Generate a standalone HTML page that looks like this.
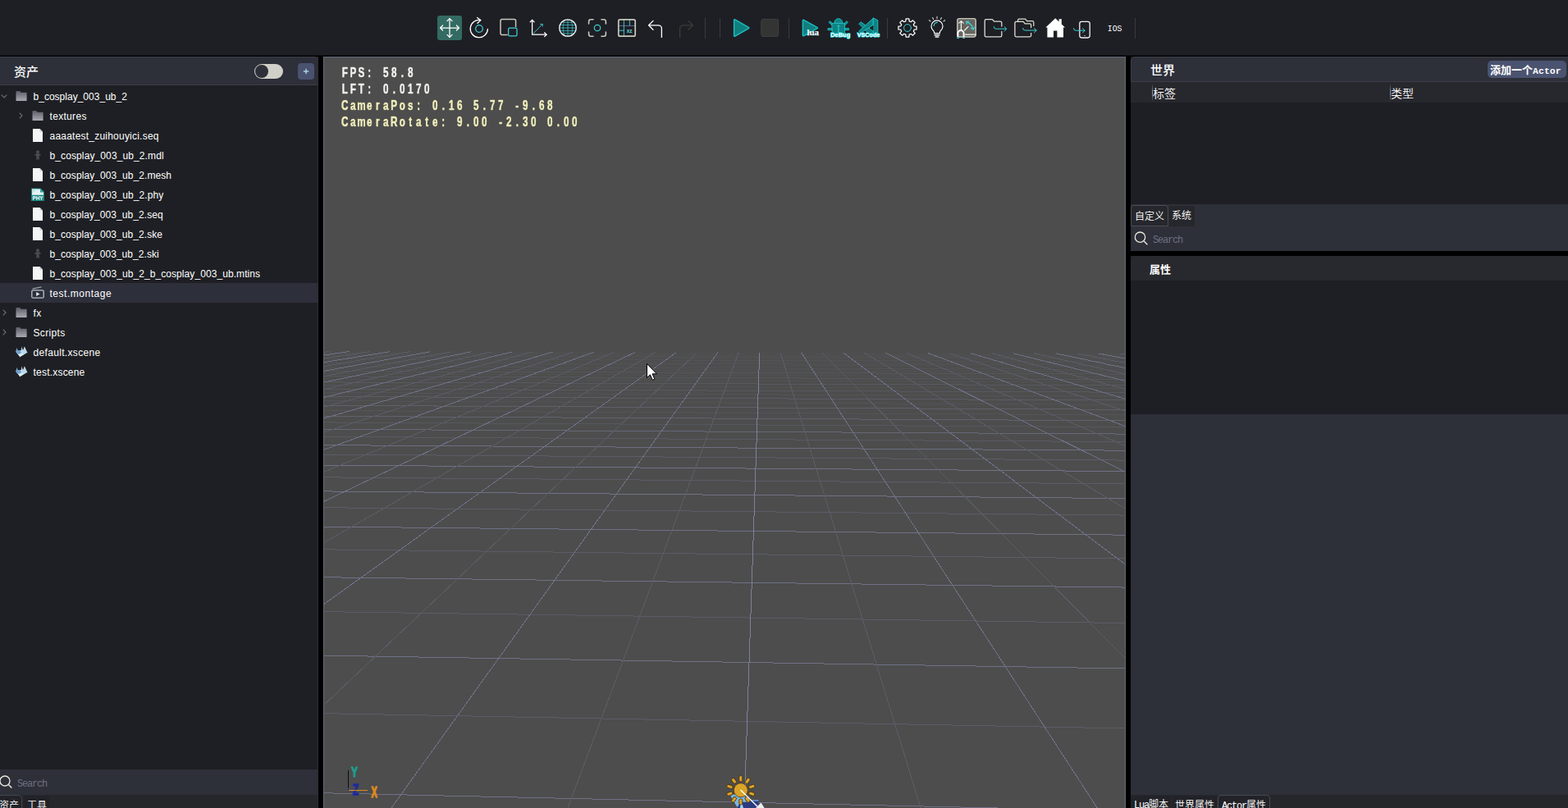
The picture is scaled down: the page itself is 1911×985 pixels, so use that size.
<!DOCTYPE html>
<html lang="zh-CN">
<head>
<meta charset="utf-8">
<title>Editor</title>
<style>
*{box-sizing:border-box;margin:0;padding:0}
html,body{width:1911px;height:985px;overflow:hidden;background:#000}
body{position:relative;font-family:"Liberation Sans","Noto Sans CJK SC",sans-serif;color:#fff;font-size:12px}
.abs{position:absolute}
#topbar{position:absolute;left:0;top:0;width:1911px;height:67px;background:#1e1f24;border-bottom:1px solid #101114;box-sizing:content-box}
#left{position:absolute;left:0;top:69px;width:388px;height:916px;background:#1e1f24;overflow:hidden;border-right:1px solid #2c2e35}
#lhead{position:absolute;left:0;top:0;width:388px;height:35px;background:#2d2f39;border:1px solid #3b3d47;border-left:0;border-top-right-radius:5px}
#lhead .title{position:absolute;left:17px;top:8px;font-size:15px;line-height:20px;font-weight:500;font-family:"Liberation Sans","Noto Sans CJK SC",sans-serif}
.toggle{position:absolute;left:310px;top:8px;width:35px;height:18px;border-radius:9px;background:#d0d0c8}
.toggle i{position:absolute;left:1px;top:1px;width:16px;height:16px;border-radius:8px;background:#2d2f39}
.plus{position:absolute;left:363px;top:7px;width:20px;height:20px;border-radius:4px;background:#4a5270}
.row{position:absolute;left:0;width:388px;height:24px;line-height:24px;font-size:12px;color:#fff;white-space:nowrap}
.row.sel{background:#2d2f3b}
.row span{position:absolute;top:1px}
.row svg{position:absolute}
#lsearch{position:absolute;left:0;top:869px;width:388px;height:31px;background:#2d2f39}
#ltabs{position:absolute;left:0;top:900px;width:388px;height:16px;background:#26272b}
#view{position:absolute;left:394px;top:69px;width:978px;height:916px;background:#4d4d4d;overflow:hidden}
#vborder{position:absolute;left:394px;top:69px;width:978px;height:930px;border:1px solid #656a7c;pointer-events:none}
#right{position:absolute;left:1378px;top:69px;width:533px;height:916px;background:#1e1f24;overflow:hidden}
.thin{font-family:"Liberation Sans","Noto Sans CJK SC",sans-serif;font-weight:350}
.mono{font-family:"Liberation Mono",monospace;letter-spacing:-1.2px}
.cjk{font-family:"Liberation Serif","Noto Sans CJK SC",sans-serif}
</style>
</head>
<body>
<div id="topbar">
<div class="abs" style="left:533px;top:19px;width:30px;height:30px;border-radius:3px;background:#336b62"></div>
<svg class="abs" style="left:0;top:0" width="1911" height="68" viewBox="0 0 1911 68" fill="none" stroke-linecap="round" stroke-linejoin="round">
<!-- move -->
<g stroke="#fff" stroke-width="1.250">
<path d="M548 22.6V45.4M536.6 34H559.4"/>
<path d="M545 25.6L548 22.6L551 25.6M545 42.4L548 45.4L551 42.4M539.6 31L536.6 34L539.6 37M556.4 31L559.4 34L556.4 37"/>
</g>
<!-- rotate -->
<g stroke="#fff" stroke-width="1.300">
<path d="M585.6 24.6A10.6 10.6 0 1 0 594.4 35.4"/>
<path d="M581.6 21.4L585.8 24.6L582 28.2"/>
</g>
<circle cx="584" cy="35" r="4.300" stroke="#3fcfd6" stroke-width="1.250"/>
<!-- scale -->
<path d="M618 42.4H612A2 2 0 0 1 610 40.4V25.6A2 2 0 0 1 612 23.6H626.6A2 2 0 0 1 628.6 25.6V32.6" stroke="#c9c7bd" stroke-width="1.500"/>
<rect x="619.600" y="34" width="10.400" height="9.800" rx="1.600" stroke="#3fcfd6" stroke-width="1.250"/>
<!-- axis -->
<g stroke="#fff" stroke-width="1.25">
<path d="M648.600 24.400V42.200H666"/>
<path d="M646.200 26.800L648.600 24.400L651 26.800M663.600 39.800L666 42.200L663.600 44.600"/>
</g>
<g stroke="#3fcfd6" stroke-width=".9"><path d="M650.200 40.600L661 29.600"/><path d="M658.600 29.400L661.200 29.400L661.200 32"/></g>
<!-- globe -->
<g stroke="#3fcfd6" stroke-width="0.7">
<path d="M682 30.5H702M681.6 34H702.4M682 37.5H702M684.6 27.2H699.4M684.6 40.8H699.4"/>
<path d="M692 23.8V44.2M688.2 24.4C685.6 30 685.6 38 688.2 43.6M695.8 24.4C698.4 30 698.4 38 695.8 43.6"/>
</g>
<circle cx="692" cy="34" r="10.200" stroke="#f4f3ee" stroke-width="1.25"/>
<!-- focus -->
<g stroke="#c9c7bd" stroke-width="1.600">
<path d="M717.6 29V26.2A2.4 2.4 0 0 1 720 23.8H723M733 23.8H736A2.4 2.4 0 0 1 738.4 26.2V29M738.4 39V41.8A2.4 2.4 0 0 1 736 44.200H733M723 44.2H720A2.4 2.4 0 0 1 717.600 41.8V39"/>
</g>
<circle cx="728" cy="34" r="3.700" stroke="#3fcfd6" stroke-width="1.200"/>
<!-- grid xz -->
<path d="M753.8 31.4H774.2" stroke="#5d6c9c" stroke-width="1"/>
<path d="M760.400 24V31" stroke="#3fcfd6" stroke-width=".9"/>
<path d="M760.400 31.600V44M767.400 24V31M754 37.200H760.400" stroke="#3fcfd6" stroke-width=".9"/>
<rect x="753.800" y="23.800" width="20.400" height="20.400" rx="2" stroke="#c9c7bd" stroke-width="1.700"/>
<text x="767.2" y="39.6" font-size="6.500" font-weight="bold" fill="#5fd6dc" stroke="none" text-anchor="middle" font-family="Liberation Sans,sans-serif">xz</text>
<!-- undo -->
<g stroke="#fff" stroke-width="1.300">
<path d="M796 25.4L790.6 30.8L796 36.2"/>
<path d="M791 30.8H802.400A4 4 0 0 1 806.4 34.8V45.4" />
</g>
<!-- redo -->
<g stroke="#3b3b3b" stroke-width="1.300">
<path d="M839 25.400L844.4 30.8L839 36.2"/>
<path d="M844 30.8H832.600A4 4 0 0 0 828.600 34.8V45.4" />
</g>
<!-- separators -->
<path d="M859.500 22V47M877.500 22V47M961.500 22V47M1081.500 22V47M1383.500 22V47" stroke="#3a3a3c" stroke-width="1" stroke-linecap="butt"/>
<!-- play -->
<path d="M895.400 24.600V43.400L912 34Z" fill="#10807f" stroke="#1fc3c9" stroke-width="3" stroke-linejoin="round"/><path d="M895.400 24.600V43.400L912 34Z" fill="#10807f" stroke="#10807f" stroke-width=".3" stroke-linejoin="round"/>
<!-- stop -->
<rect x="927.800" y="23.400" width="20.800" height="21" rx="2" fill="#343434" stroke="#404040" stroke-width="1"/>
<!-- lua -->
<path d="M979.200 25V43L995.600 34Z" fill="#10807f" stroke="#1fc3c9" stroke-width="3" stroke-linejoin="round"/><path d="M979.200 25V43L995.600 34Z" fill="#10807f" stroke="#10807f" stroke-width=".3" stroke-linejoin="round"/>
<text x="983.4" y="42.800" font-size="10" font-weight="bold" fill="#fff" stroke="#bfeff2" stroke-width=".25" font-family="Liberation Serif,serif" textLength="14.6" lengthAdjust="spacingAndGlyphs">lua</text>
<!-- debug -->
<g fill="#0f8282" stroke="#1ec6cc" stroke-width=".9" stroke-linejoin="round">
<path d="M1011.800 26L1015.600 29.400L1014.400 31L1010.400 27.600ZM1031.800 26L1028 29.400L1029.200 31L1033.200 27.600Z"/>
<path d="M1009.400 34.600H1014.400V36.600H1009.400ZM1029.400 34.600H1034.400V36.600H1029.400Z"/>
<path d="M1016.900 27.600A4.900 4.900 0 0 1 1026.700 27.600Z"/>
<path d="M1014.200 28.400H1029.600V38.600Q1029.600 42.600 1021.900 42.600Q1014.200 42.600 1014.200 38.600Z"/>
</g>
<path d="M1020.600 31.200H1023.200M1021.900 31.200V40" stroke="#29d0d6" stroke-width="1.100" stroke-linecap="butt"/>
<text x="1024.200" y="45.400" font-size="7.600" font-weight="bold" fill="#fff" stroke="#1fd0d6" stroke-width="1.300" paint-order="stroke" text-anchor="middle" font-family="Liberation Sans,sans-serif" textLength="24" lengthAdjust="spacingAndGlyphs">DeBug</text>
<!-- vscode -->
<g fill="#0f8282" stroke="#1ec6cc" stroke-width=".9" stroke-linejoin="round">
<path d="M1047 28.800L1049.300 26.800L1064.500 38.200V44H1062Z"/>
<path d="M1047 37.800L1064.500 22V30.300L1049.400 40Z"/>
<path d="M1064.500 22L1069.800 24.700V41.300L1064.500 44Z"/>
</g>
<path d="M1059.800 34.100L1064.300 30.900V37.600Z" fill="#1e1f24"/>
<text x="1058.500" y="45.300" font-size="7.600" font-weight="bold" fill="#fff" stroke="#1fd0d6" stroke-width="1.300" paint-order="stroke" text-anchor="middle" font-family="Liberation Sans,sans-serif" textLength="27.600" lengthAdjust="spacingAndGlyphs">VSCode</text>
<!-- gear -->
<path stroke="#fff" stroke-width="1.250" d="M1103.84 25.88L1104.11 22.96L1107.89 22.96L1108.16 25.88L1110.21 26.73L1112.47 24.85L1115.15 27.53L1113.27 29.79L1114.12 31.84L1117.04 32.11L1117.04 35.89L1114.12 36.16L1113.27 38.21L1115.15 40.47L1112.47 43.15L1110.21 41.27L1108.16 42.12L1107.89 45.04L1104.11 45.04L1103.84 42.12L1101.79 41.27L1099.53 43.15L1096.85 40.47L1098.73 38.21L1097.88 36.16L1094.96 35.89L1094.96 32.11L1097.88 31.84L1098.73 29.79L1096.85 27.53L1099.53 24.85L1101.79 26.73Z"/>
<circle cx="1106" cy="34" r="4.400" stroke="#3fcfd6" stroke-width="1"/>
<!-- bulb -->
<g stroke="#fff" stroke-width="1.200">
<path d="M1138.600 40.600V39.600Q1138.600 38.400 1137.400 37.200A7 7 0 1 1 1146.600 37.200Q1145.400 38.400 1145.400 39.600V40.600Z"/>
<path d="M1139.200 42.800H1144.800M1140.200 45H1143.800" stroke-width="1.5"/>
<path d="M1142 20.400V22.400M1136.600 21.600L1137.600 23.400M1147.400 21.600L1146.400 23.400M1132.400 24.600L1134 26M1151.600 24.600L1150 26" stroke-width="1.1" stroke="#d8d8d8"/>
</g>
<path d="M1138.200 31.400A4.200 4.200 0 0 1 1142.400 27.400" stroke="#3fcfd6" stroke-width="1.2"/>
<!-- image/magnet -->
<rect x="1166.800" y="22.600" width="22.400" height="22.400" rx="2.400" fill="#66665f" stroke="#c9c7bd" stroke-width="1.4"/>
<path d="M1171.400 36V25.600M1168.800 28.200L1171.400 25.600L1174 28.200M1175.600 37L1180 32.400M1176.400 42.200H1189" stroke="#f4f4f4" stroke-width="1.2"/>
<g stroke="#3fcfd6" stroke-width="1.3"><path d="M1178 26.600Q1184.600 29 1186 35.600"/><path d="M1178.200 29.200L1177.800 26.400L1180.600 26.200M1183.600 34.400L1186.200 36L1187.600 33.200"/></g>
<path d="M1167.400 45V40.600A3.600 3.600 0 0 1 1174.600 40.600V45" stroke="#fff" stroke-width="1.900" stroke-linecap="butt"/>
<path d="M1166.200 46.200H1168.800M1173.200 46.200H1175.800" stroke="#3fcfd6" stroke-width="1.600" stroke-linecap="butt"/>
<!-- folder arrow -->
<path d="M1220.800 32V27.800A1.600 1.600 0 0 0 1219.200 26.200H1211.600L1209.400 23.600H1201.800A1.600 1.600 0 0 0 1200.200 25.200V43.200A1.600 1.600 0 0 0 1201.800 44.800H1219.200A1.600 1.600 0 0 0 1220.800 43.200V38.400" stroke="#dedcd3" stroke-width="1.300"/>
<g stroke="#3fcfd6" stroke-width="1"><path d="M1211.200 32.600Q1211.200 35.200 1214 35.200H1226.600"/><path d="M1224 32.600L1226.800 35.200L1224 38"/></g>
<!-- folders arrow -->
<path d="M1240.600 25.800V24.600A1.400 1.400 0 0 1 1242 23.200H1249.600L1251.600 25.600H1258A1.800 1.800 0 0 1 1259.800 27.400V31.400" stroke="#dedcd3" stroke-width="1.250"/>
<path d="M1256.600 33.600V30.400A1.500 1.500 0 0 0 1255.100 28.900H1249.200L1247.200 26.400H1238.400A1.500 1.500 0 0 0 1236.900 27.900V43.300A1.500 1.500 0 0 0 1238.400 44.800H1255.100A1.500 1.500 0 0 0 1256.600 43.300V40.400" stroke="#dedcd3" stroke-width="1.300"/>
<g stroke="#3fcfd6" stroke-width="1"><path d="M1246.600 34.400Q1246.600 37 1249.400 37H1263"/><path d="M1260.400 34.400L1263.200 37L1260.400 39.800"/></g>
<!-- home -->
<path d="M1274.400 33.600L1286.200 22.200L1290.600 26.400V23.200H1293.800V29.600L1298 33.600H1296V45.600H1288.400V37.400H1284V45.600H1276.400V33.600Z" fill="#fff" stroke="none"/>
<!-- phone -->
<rect x="1315.800" y="26.400" width="12.400" height="19.600" rx="2.400" stroke="#f2f2f2" stroke-width="1.300"/>
<path d="M1321.600 43.600H1322.600" stroke="#aaa" stroke-width="1"/>
<g stroke="#3fcfd6" stroke-width="1"><path d="M1308.400 34.600Q1308.400 37.200 1311.200 37.200H1321.800"/><path d="M1319.400 34.600L1322.200 37.200L1319.400 40"/></g>
<text x="1349.800" y="38.200" font-size="11.400" fill="#fff" stroke="none" font-family="Liberation Mono,monospace" textLength="17.600" lengthAdjust="spacingAndGlyphs">IOS</text>
</svg>
</div>
<div id="left">
<div id="lhead"><div class="title">资产</div><div class="toggle"><i></i></div><div class="plus"><svg class="abs" style="left:6px;top:6px" width="8" height="8" viewBox="0 0 8 8"><path d="M4 0.800V7.200M0.800 4H7.200" stroke="#a9d3dc" stroke-width="1.400"/></svg></div></div>
<div class="row" style="top:36px"><svg width="8" height="5" viewBox="0 0 8 5" style="left:1px;top:10px"><path d="M0.7 0.7 L4 4 L7.3 0.7" fill="none" stroke="#6d7079" stroke-width="1.1"/></svg><svg width="14" height="12" viewBox="0 0 14 12" style="left:19px;top:6px"><defs><linearGradient id="fg0" x1="0" y1="0" x2="0" y2="1"><stop offset="0" stop-color="#5a5d68"/><stop offset="1" stop-color="#a9aab0"/></linearGradient></defs><path d="M0.5 0.8 Q0.5 0 1.3 0 H5.2 L6.6 1.8 H13 Q13.6 1.8 13.6 2.4 V11.4 Q13.6 12 13 12 H1.1 Q0.5 12 0.5 11.4 Z" fill="url(#fg0)"/></svg><span style="left:40.5px;letter-spacing:0.016px">b_cosplay_003_ub_2</span></div>
<div class="row" style="top:60px"><svg width="5" height="8" viewBox="0 0 5 8" style="left:23px;top:8px"><path d="M0.7 0.7 L4 4 L0.7 7.3" fill="none" stroke="#6d7079" stroke-width="1.1"/></svg><svg width="14" height="12" viewBox="0 0 14 12" style="left:39px;top:6px"><defs><linearGradient id="fg1" x1="0" y1="0" x2="0" y2="1"><stop offset="0" stop-color="#5a5d68"/><stop offset="1" stop-color="#a9aab0"/></linearGradient></defs><path d="M0.5 0.8 Q0.5 0 1.3 0 H5.2 L6.6 1.8 H13 Q13.6 1.8 13.6 2.4 V11.4 Q13.6 12 13 12 H1.1 Q0.5 12 0.5 11.4 Z" fill="url(#fg1)"/></svg><span style="left:60.5px;letter-spacing:0.314px">textures</span></div>
<div class="row" style="top:84px"><svg width="12" height="16" viewBox="0 0 12 16" style="left:40px;top:4px"><path d="M0 0 H8.5 L12 3.5 V16 H0 Z" fill="#f3f5f6"/><path d="M8.5 0 V3.5 H12 Z" fill="#c9ccd0"/></svg><span style="left:60.5px;letter-spacing:0.222px">aaaatest_zuihouyici.seq</span></div>
<div class="row" style="top:108px"><svg width="10" height="12" viewBox="0 0 10 12" style="left:41px;top:6px"><circle cx="5" cy="2.200" r="2" fill="#4c4d52"/><path d="M1.200 5.400L3.600 4.200H6.400L8.800 5.400L8.200 7L6.600 6.400V8.400L7 11.400H5.400L5 9.200L4.600 11.400H3L3.400 8.400V6.400L1.800 7Z" fill="#4c4d52"/></svg><span style="left:60.5px;letter-spacing:0.110px">b_cosplay_003_ub_2.mdl</span></div>
<div class="row" style="top:132px"><svg width="12" height="16" viewBox="0 0 12 16" style="left:40px;top:4px"><path d="M0 0 H8.5 L12 3.5 V16 H0 Z" fill="#f3f5f6"/><path d="M8.5 0 V3.5 H12 Z" fill="#c9ccd0"/></svg><span style="left:60.5px;letter-spacing:0.079px">b_cosplay_003_ub_2.mesh</span></div>
<div class="row" style="top:156px"><svg width="16" height="16" viewBox="0 0 16 16" style="left:38px;top:4px"><path d="M0 0.500H11.500L16 5V16H0Z" fill="#14857f"/><path d="M1 1.400H11L15 5.400V8.800H1Z" fill="#e4f3f4"/><path d="M1 1.400H8L1 7Z" fill="#c5e6e8"/><path d="M11 1.400L15 5.400H11Z" fill="#2f9fa3"/><text x="8" y="15" font-size="7" font-weight="bold" text-anchor="middle" fill="#fff" font-family="Liberation Sans,sans-serif" textLength="13" lengthAdjust="spacingAndGlyphs">PHY</text></svg><span style="left:60.5px;letter-spacing:0.092px">b_cosplay_003_ub_2.phy</span></div>
<div class="row" style="top:180px"><svg width="12" height="16" viewBox="0 0 12 16" style="left:40px;top:4px"><path d="M0 0 H8.5 L12 3.5 V16 H0 Z" fill="#f3f5f6"/><path d="M8.5 0 V3.5 H12 Z" fill="#c9ccd0"/></svg><span style="left:60.5px;letter-spacing:0.064px">b_cosplay_003_ub_2.seq</span></div>
<div class="row" style="top:204px"><svg width="12" height="16" viewBox="0 0 12 16" style="left:40px;top:4px"><path d="M0 0 H8.5 L12 3.5 V16 H0 Z" fill="#f3f5f6"/><path d="M8.5 0 V3.5 H12 Z" fill="#c9ccd0"/></svg><span style="left:60.5px;letter-spacing:0.068px">b_cosplay_003_ub_2.ske</span></div>
<div class="row" style="top:228px"><svg width="10" height="12" viewBox="0 0 10 12" style="left:41px;top:6px"><circle cx="5" cy="2.200" r="2" fill="#4c4d52"/><path d="M1.200 5.400L3.600 4.200H6.400L8.800 5.400L8.200 7L6.600 6.400V8.400L7 11.400H5.400L5 9.200L4.600 11.400H3L3.400 8.400V6.400L1.800 7Z" fill="#4c4d52"/></svg><span style="left:60.5px;letter-spacing:0.050px">b_cosplay_003_ub_2.ski</span></div>
<div class="row" style="top:252px"><svg width="12" height="16" viewBox="0 0 12 16" style="left:40px;top:4px"><path d="M0 0 H8.5 L12 3.5 V16 H0 Z" fill="#f3f5f6"/><path d="M8.5 0 V3.5 H12 Z" fill="#c9ccd0"/></svg><span style="left:60.5px;letter-spacing:0.075px">b_cosplay_003_ub_2_b_cosplay_003_ub.mtins</span></div>
<div class="row sel" style="top:276px"><svg width="16" height="15" viewBox="0 0 16 15" style="left:38px;top:4px"><path d="M1.5 3.2 L12.5 0.8" stroke="#9aa0a6" stroke-width="1.2" fill="none"/><rect x="0.8" y="4.8" width="14.4" height="9.4" rx="1.5" fill="none" stroke="#b8c4c8" stroke-width="1.3"/><path d="M6.2 7 V12 L10.5 9.5 Z" fill="#dfe8ea"/></svg><span style="left:60.5px;letter-spacing:0.519px">test.montage</span></div>
<div class="row" style="top:300px"><svg width="5" height="8" viewBox="0 0 5 8" style="left:3px;top:8px"><path d="M0.7 0.7 L4 4 L0.7 7.3" fill="none" stroke="#6d7079" stroke-width="1.1"/></svg><svg width="14" height="12" viewBox="0 0 14 12" style="left:19px;top:6px"><defs><linearGradient id="fg11" x1="0" y1="0" x2="0" y2="1"><stop offset="0" stop-color="#5a5d68"/><stop offset="1" stop-color="#a9aab0"/></linearGradient></defs><path d="M0.5 0.8 Q0.5 0 1.3 0 H5.2 L6.6 1.8 H13 Q13.6 1.8 13.6 2.4 V11.4 Q13.6 12 13 12 H1.1 Q0.5 12 0.5 11.4 Z" fill="url(#fg11)"/></svg><span style="left:40.5px;letter-spacing:0.328px">fx</span></div>
<div class="row" style="top:324px"><svg width="5" height="8" viewBox="0 0 5 8" style="left:3px;top:8px"><path d="M0.7 0.7 L4 4 L0.7 7.3" fill="none" stroke="#6d7079" stroke-width="1.1"/></svg><svg width="14" height="12" viewBox="0 0 14 12" style="left:19px;top:6px"><defs><linearGradient id="fg12" x1="0" y1="0" x2="0" y2="1"><stop offset="0" stop-color="#5a5d68"/><stop offset="1" stop-color="#a9aab0"/></linearGradient></defs><path d="M0.5 0.8 Q0.5 0 1.3 0 H5.2 L6.6 1.8 H13 Q13.6 1.8 13.6 2.4 V11.4 Q13.6 12 13 12 H1.1 Q0.5 12 0.5 11.4 Z" fill="url(#fg12)"/></svg><span style="left:40.5px;letter-spacing:0.330px">Scripts</span></div>
<div class="row" style="top:348px"><svg width="15" height="14" viewBox="0 0 15 14" style="left:19px;top:5px"><path d="M0 6.500L5.500 13.600L14.600 8L9.500 4.500Z" fill="#d9edf5"/><path d="M0.200 6.500L1.500 2L2.800 5L5.200 5.200L7.400 6.500L6.500 9L2.800 9.800Z" fill="#6fa3cf"/><path d="M6.200 7L7.600 0.400L8.900 5.500L10.900 0.200L13.600 6.300L14.600 8L10.500 9.800L7 8.500Z" fill="#bcd9ea"/><path d="M5.500 13.600L14.600 8" stroke="#0c1a0c" stroke-width=".8"/></svg><span style="left:40.5px;letter-spacing:0.329px">default.xscene</span></div>
<div class="row" style="top:372px"><svg width="15" height="14" viewBox="0 0 15 14" style="left:19px;top:5px"><path d="M0 6.500L5.500 13.600L14.600 8L9.500 4.500Z" fill="#d9edf5"/><path d="M0.200 6.500L1.500 2L2.800 5L5.200 5.200L7.400 6.500L6.500 9L2.800 9.800Z" fill="#6fa3cf"/><path d="M6.200 7L7.600 0.400L8.900 5.500L10.900 0.200L13.600 6.300L14.600 8L10.500 9.800L7 8.500Z" fill="#bcd9ea"/><path d="M5.500 13.600L14.600 8" stroke="#0c1a0c" stroke-width=".8"/></svg><span style="left:40.5px;letter-spacing:0.209px">test.xscene</span></div>
<div id="lsearch"><svg class="abs" style="left:-3px;top:5px" width="20" height="20" viewBox="0 0 20 20" fill="none"><circle cx="9" cy="9" r="6" stroke="#e9e9de" stroke-width="1.3"/><path d="M13.400 13.400L17.400 17.400" stroke="#e9e9de" stroke-width="1.4"/></svg><span class="abs mono" style="left:21px;top:9.5px;font-size:12px;line-height:16px;color:#6d7080">Search</span></div>
<div id="ltabs"><div class="abs thin" style="left:-8px;top:0;width:35px;height:20px;border:1px solid #44464e;border-radius:4px 4px 0 0;background:#222328;font-size:12px;line-height:24px;padding-left:6px;white-space:nowrap">资产</div><div class="abs thin" style="left:29px;top:1px;width:31px;height:20px;background:#222328;border-radius:3px 3px 0 0;font-size:12px;line-height:24px;padding-left:4px;white-space:nowrap">工具</div></div>
</div>
<div id="view">
<svg class="abs" style="left:0;top:1px" width="978" height="915" viewBox="0 0 978 915" fill="none" stroke-width="1" shape-rendering="crispEdges">
<path d="M-2.0 896.7L911.9 917.0M-2.0 729.1L980.0 745.0M-2.0 633.7L980.0 646.1M-2.0 572.0L980.0 582.2M-2.0 528.9L980.0 537.6M-2.0 497.0L980.0 504.6" stroke="#6f7187"/>
<path d="M-2.0 799.6L980.0 818.0M-2.0 675.6L980.0 689.6M-2.0 599.8L980.0 611.0M-2.0 548.7L980.0 558.1M-2.0 511.8L980.0 519.9M-2.0 484.0L980.0 491.1" stroke="#5b5c68"/>
<path d="M-2.0 472.6L980.0 479.2" stroke="#6c6e82"/>
<path d="M-2.0 462.3L980.0 468.6" stroke="#595a64"/>
<path d="M-2.0 453.2L980.0 459.1" stroke="#666878"/>
<path d="M-2.0 444.9L980.0 450.6" stroke="#56575f"/>
<path d="M-2.0 437.4L980.0 442.8" stroke="#61626f"/>
<path d="M-2.0 430.6L980.0 435.8" stroke="#54545a"/>
<path d="M-2.0 424.3L980.0 429.3" stroke="#5e5f6a"/>
<path d="M-2.0 418.6L980.0 423.4M-2.0 408.5L980.0 412.9" stroke="#535358"/>
<path d="M-2.0 413.4L980.0 417.9" stroke="#5b5c65"/>
<path d="M-2.0 404.0L980.0 408.2M-2.0 395.9L980.0 399.8" stroke="#585960"/>
<path d="M-2.0 399.8L980.0 403.9" stroke="#525256"/>
<path d="M-2.0 392.2L980.0 396.0M-2.0 385.6L980.0 389.2M-2.0 379.8L980.0 383.1" stroke="#505154"/>
<path d="M-2.0 388.8L980.0 392.5M-2.0 382.6L980.0 386.1" stroke="#56565c"/>
<path d="M-2.0 377.1L980.0 380.4M-2.0 372.2L980.0 375.3M-2.0 367.7L980.0 370.7M-2.0 363.8L980.0 366.6" stroke="#535357"/>
<path d="M-2.0 374.6L980.0 377.7M-2.0 369.9L980.0 372.9M-2.0 365.7L980.0 368.6M-2.0 361.9L980.0 364.6" stroke="#4f5052"/>
<path d="M-2.0 360.1L980.0 362.8" stroke="#505052"/>
<path d="M-2.0 358.4L980.0 361.1" stroke="#4e4e4f"/>
<path d="M-2.0 359.7L7.2 358.5M-2.0 367.5L56.3 358.6M-2.0 377.1L105.6 358.7M-2.0 389.3L155.0 358.9M-2.0 405.2L204.7 359.0M-2.0 426.8L254.5 359.1M-2.0 457.9L304.5 359.3M-2.0 506.5L354.7 359.4M-2.0 593.2L405.0 359.5M-2.0 792.0L455.6 359.7M297.2 917.0L506.3 359.8M728.8 917.0L557.2 359.9M980.0 735.1L608.3 360.1M980.0 551.6L659.6 360.2M980.0 474.4L711.0 360.3M980.0 431.9L762.7 360.5M980.0 405.0L814.5 360.6M980.0 386.5L866.6 360.8M980.0 372.9L918.8 360.9M980.0 362.6L971.2 361.0" stroke="#5b5c68"/>
<path d="M-2.0 363.4L31.7 358.5M-2.0 372.1L80.9 358.7M-2.0 382.9L130.3 358.8M-2.0 396.7L179.8 358.9M-2.0 415.1L229.6 359.1M-2.0 440.8L279.5 359.2M-2.0 479.2L329.6 359.3M-2.0 542.7L379.8 359.5M-2.0 668.4L430.3 359.6M81.5 917.0L480.9 359.7M944.6 917.0L582.7 360.0M980.0 619.8L633.9 360.1M980.0 506.5L685.3 360.3M980.0 450.5L736.8 360.4M980.0 417.1L788.6 360.5M980.0 395.0L840.5 360.7M980.0 379.2L892.6 360.8M980.0 367.4L945.0 361.0" stroke="#6f7187"/>
<path d="M513.0 917.0L531.7 359.9" stroke="#7f819d"/>
</svg>
<svg class="abs" style="left:0;top:0" width="978" height="916" viewBox="394 69 978 916">
<g font-family="Liberation Sans,sans-serif" font-weight="bold" font-size="16" text-anchor="middle" stroke-width=".55" stroke-linejoin="round" transform="scale(0.730,1)" style="filter:drop-shadow(0 0 .7px #2e2e2e) drop-shadow(0 0 .7px #2e2e2e)">
<text x="575.8 589.5 603.2 616.8 630.5 644.2 657.9 671.6 685.3" y="94.1" fill="#f2f2ee" stroke="#f2f2ee" xml:space="preserve">FPS: 58.8</text>
<text x="575.8 589.5 603.2 616.8 630.5 644.2 657.9 671.6 685.3 699.0 712.7" y="114.1" fill="#f2f2ee" stroke="#f2f2ee" xml:space="preserve">LFT: 0.0170</text>
<text x="575.8 589.5 603.2 616.8 630.5 644.2 657.9 671.6 685.3 699.0 712.7 726.4 740.1 753.8 767.5 781.2 794.9 808.6 822.3 836.0 849.7 863.4 877.1 890.8 904.5 918.2" y="134.1" fill="#f1efbe" stroke="#f1efbe" xml:space="preserve">CameraPos: 0.16 5.77 -9.68</text>
<text x="575.8 589.5 603.2 616.8 630.5 644.2 657.9 671.6 685.3 699.0 712.7 726.4 740.1 753.8 767.5 781.2 794.9 808.6 822.3 836.0 849.7 863.4 877.1 890.8 904.5 918.2 931.9 945.6 959.3" y="154.1" fill="#f1efbe" stroke="#f1efbe" xml:space="preserve">CameraRotate: 9.00 -2.30 0.00</text>
</g>
<g shape-rendering="crispEdges"><path d="M424.500 939V961" stroke="#081206" stroke-width="1"/><path d="M424.500 960V964" stroke="#1c2a9c" stroke-width="1"/></g>
<g font-family="Liberation Sans,sans-serif" font-weight="bold" font-size="15" text-anchor="middle" stroke-width="1.1" stroke-linejoin="round"><text x="432" y="946.6" fill="#1f9e8c" stroke="#1f9e8c" transform="translate(432 0) scale(0.8 1.08) translate(-432 -70.12)">Y</text><text x="433.4" y="968.8" fill="#1c2a9c" stroke="#1c2a9c" transform="translate(433.4 0) scale(0.8 1.22) translate(-433.4 -174.70)">Z</text><text x="456" y="972.4" fill="#e08a1e" stroke="#e08a1e" transform="translate(456 0) scale(0.72 1.17) translate(-456 -141.29)">X</text></g><path d="M425 963.500H448" stroke="#e08a1e" stroke-width="1" shape-rendering="crispEdges"/>
<path d="M890 969.500L897 968L908 971L912 985H899Z" fill="#79b6df"/><path d="M898 985L902.500 978L913 977.500L915 975.500L924 975L925.500 985Z" fill="#2b3b82"/><path d="M915 975.200H924.500V976.600H915Z" fill="#6fa8dc"/><path d="M903 975L906 985H902Z" fill="#9fd0ee"/>
<g fill="#d9a428" stroke="#4e3210" stroke-width=".9"><rect x="-2" y="-17.600" width="4" height="7" rx="1.400" transform="translate(902.8 963.3) rotate(0)"/><rect x="-2" y="-17.600" width="4" height="7" rx="1.400" transform="translate(902.8 963.3) rotate(36)"/><rect x="-2" y="-17.600" width="4" height="7" rx="1.400" transform="translate(902.8 963.3) rotate(72)"/><rect x="-2" y="-17.600" width="4" height="7" rx="1.400" transform="translate(902.8 963.3) rotate(108)"/><rect x="-2" y="-17.600" width="4" height="7" rx="1.400" transform="translate(902.8 963.3) rotate(144)"/><rect x="-2" y="-17.600" width="4" height="7" rx="1.400" transform="translate(902.8 963.3) rotate(180)"/><rect x="-2" y="-17.600" width="4" height="7" rx="1.400" transform="translate(902.8 963.3) rotate(216)"/><rect x="-2" y="-17.600" width="4" height="7" rx="1.400" transform="translate(902.8 963.3) rotate(252)"/><rect x="-2" y="-17.600" width="4" height="7" rx="1.400" transform="translate(902.8 963.3) rotate(288)"/><rect x="-2" y="-17.600" width="4" height="7" rx="1.400" transform="translate(902.8 963.3) rotate(324)"/><circle cx="902.8" cy="963.3" r="8.400"/></g>
<circle cx="902.8" cy="963.3" r="8" fill="#d9a428"/>
<path d="M902.600 963L923 983" stroke="#fff" stroke-width="1.3"/><path d="M920.500 985.500L927.500 978.500L932 985.500Z" fill="#ececec"/>
<path d="M788.500 443.500V460.500L792.400 456.800L795.200 463.200L797.800 462L795 455.800H800.400Z" fill="#fff" stroke="#000" stroke-width="1" stroke-linejoin="miter"/>
</svg>
</div>
<div id="vborder"></div>
<div id="right">
<div class="abs" style="left:0;top:0;width:534px;height:31px;background:#2d2f39;border:1px solid #3b3d47;border-top-left-radius:5px"></div>
<div class="abs" style="left:24px;top:6.5px;font-size:15px;line-height:20px;font-weight:500">世界</div>
<div class="abs" style="left:435px;top:5px;width:96px;height:21px;border-radius:5px;background:#4a5370"></div>
<div class="abs" style="left:438px;top:5px;height:21px;line-height:21px;font-size:13px;font-weight:bold;white-space:nowrap;font-family:'Noto Sans CJK SC',sans-serif">添加一个<span style="font-family:'Liberation Mono',monospace;font-size:11.4px;letter-spacing:0.1px">Actor</span></div>
<div class="abs" style="left:0;top:31px;width:533px;height:25px;background:#27282d"></div>
<div class="abs" style="left:26px;top:33px;width:1px;height:22px;background:linear-gradient(#27282d,#9a9a9a 50%,#27282d)"></div>
<div class="abs" style="left:316px;top:33px;width:1px;height:22px;background:linear-gradient(#27282d,#9a9a9a 50%,#27282d)"></div>
<div class="abs thin" style="left:27px;top:36px;font-size:14px;line-height:18px">标签</div>
<div class="abs thin" style="left:317px;top:36px;font-size:14px;line-height:18px">类型</div>
<div class="abs" style="left:0;top:180px;width:533px;height:57px;background:#2d2f39"></div>
<div class="abs" style="left:0;top:181px;width:46px;height:26px;border:1px solid #4a4c55;border-radius:4px 4px 0 0;background:#26272c"></div>
<div class="abs" style="left:46px;top:182px;width:32px;height:25px;border-radius:3px 3px 0 0;background:#26272c"></div>
<div class="abs thin" style="left:5px;top:186px;font-size:12px;line-height:18px">自定义</div>
<div class="abs thin" style="left:50px;top:185px;font-size:12px;line-height:18px">系统</div>
<svg class="abs" style="left:3px;top:212px" width="20" height="20" viewBox="0 0 20 20" fill="none"><circle cx="8.5" cy="8.200" r="6.200" stroke="#e9e9de" stroke-width="1.3"/><path d="M13 12.800L17.400 17.200" stroke="#e9e9de" stroke-width="1.4"/></svg>
<div class="abs mono" style="left:27px;top:215.500px;font-size:12px;line-height:16px;color:#6d7080">Search</div>
<div class="abs" style="left:0;top:237px;width:533px;height:6px;background:#000"></div>
<div class="abs" style="left:0;top:243px;width:533px;height:30px;background:#28292e;border-top-left-radius:4px"></div>
<div class="abs" style="left:23px;top:249.500px;font-size:13px;line-height:18px;font-weight:bold;font-family:'Noto Sans CJK SC',sans-serif">属性</div>
<div class="abs" style="left:0;top:436px;width:533px;height:464px;background:#2d2f39"></div>
<div class="abs" style="left:0;top:900px;width:533px;height:16px;background:#26272b"></div>
<div class="abs" style="left:1px;top:901px;width:48px;height:20px;border-radius:3px 3px 0 0;background:#222328"></div>
<div class="abs" style="left:51px;top:901px;width:54px;height:20px;border-radius:3px 3px 0 0;background:#222328"></div>
<div class="abs" style="left:106px;top:900px;width:64px;height:20px;border:1px solid #474951;border-radius:4px 4px 0 0;background:#222328"></div>
<div class="abs thin" style="left:4px;top:903px;font-size:12px;line-height:18px;white-space:nowrap"><span class="mono" style="font-size:12px">Lua</span>脚本</div>
<div class="abs thin" style="left:54px;top:903.5px;font-size:12px;line-height:18px;white-space:nowrap">世界属性</div>
<div class="abs thin" style="left:111px;top:903.5px;font-size:12px;line-height:18px;white-space:nowrap"><span class="mono" style="font-size:12px">Actor</span>属性</div>
</div>
</body>
</html>
